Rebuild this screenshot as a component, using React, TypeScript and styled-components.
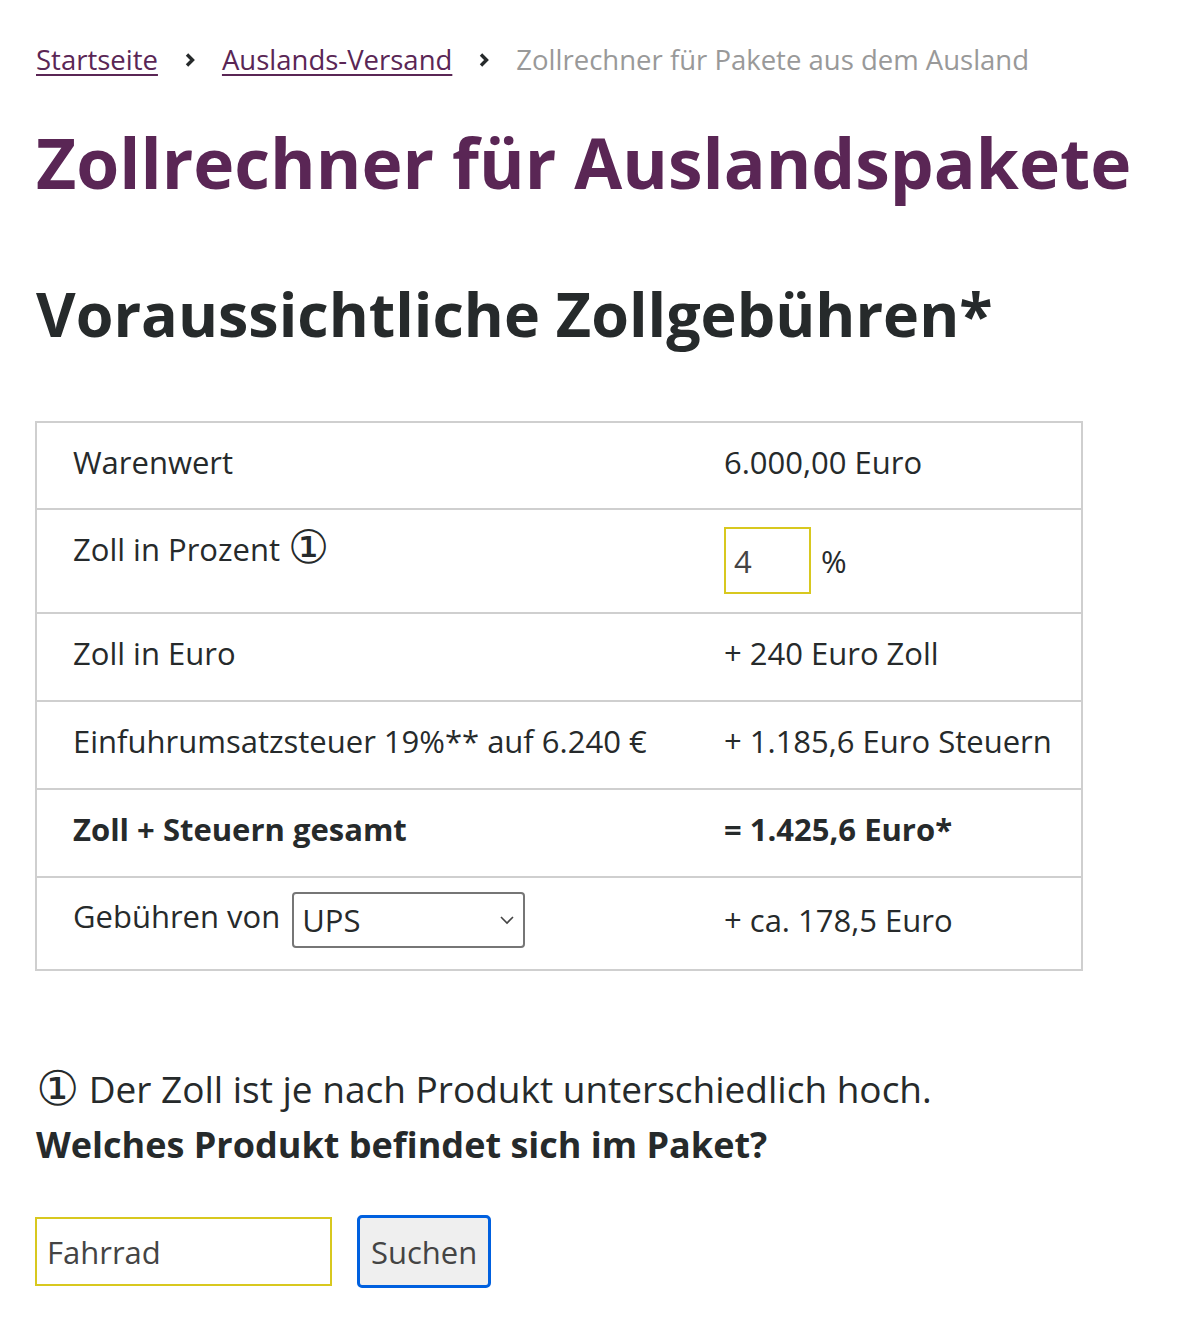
import React from 'react';
import styled, { createGlobalStyle } from 'styled-components';

const GlobalStyle = createGlobalStyle`
  body {
    margin: 0;
    background: #fff;
    font-family: 'Open Sans', 'Noto Sans', sans-serif;
    color: #262a2b;
  }
`;

const Page = styled.main`
  padding: 38px 36px 40px 36px;
`;

const Breadcrumb = styled.nav`
  display: flex;
  align-items: center;
  gap: 24px;
  font-size: 27.5px;
  line-height: 44px;
`;

const Crumb = styled.a`
  color: #5a2655;
  text-decoration: underline;
  text-underline-offset: 4px;
  text-decoration-thickness: 2px;
`;

const CurrentCrumb = styled.span`
  color: #999;
`;

const Chevron = styled.svg`
  width: 16px;
  height: 16px;
`;

const Title = styled.h1`
  margin: 32px 0 0;
  font-size: 69.5px;
  line-height: 96px;
  font-weight: 700;
  color: #5a2655;
`;

const Subtitle = styled.h2`
  margin: 59px 0 0;
  font-size: 61px;
  line-height: 90px;
  font-weight: 700;
`;

const Table = styled.table`
  margin-top: 62px;
  margin-left: -1px;
  width: 1048px;
  table-layout: fixed;
  border-collapse: collapse;
  font-size: 31px;
`;

const Row = styled.tr<{ $h: number }>`
  height: ${(p) => p.$h}px;
`;

const Cell = styled.td<{ $bold?: boolean; $top?: boolean }>`
  border: 2px solid #cfcfcf;
  border-right-width: 0;
  padding: ${(p) => (p.$top ? '18px 36px 0' : '0 36px 8px')};
  white-space: nowrap;
  vertical-align: ${(p) => (p.$top ? 'top' : 'middle')};
  font-weight: ${(p) => (p.$bold ? 700 : 400)};
  &:first-child {
    width: 579px;
    border-right: none;
  }
  &:last-child {
    border-left: none;
    border-right: 2px solid #cfcfcf;
  }
`;

const Circled = styled.span<{ $size: number }>`
  font-family: 'DejaVu Sans', sans-serif;
  font-size: ${(p) => p.$size}px;
  line-height: 0;
  vertical-align: -2px;
`;

const PercentWrap = styled.div`
  display: flex;
  align-items: center;
  gap: 10px;
  margin-top: -1px;
`;

const SmallInput = styled.input`
  box-sizing: border-box;
  width: 87px;
  height: 67px;
  border: 2px solid #d8c81f;
  padding: 0 8px;
  font: inherit;
  color: #444;
  outline: none;
`;

const SelectBox = styled.span`
  position: relative;
  display: inline-flex;
  align-items: center;
  box-sizing: border-box;
  width: 233px;
  height: 56px;
  margin-left: 12px;
  padding: 0 8px;
  border: 2px solid #767676;
  border-radius: 4px;
  vertical-align: middle;
`;

const SelectArrow = styled.svg`
  position: absolute;
  right: 8px;
  top: 50%;
  margin-top: -6px;
  width: 16px;
  height: 12px;
`;

const Note = styled.p`
  margin: 90px 0 0;
  font-size: 37px;
  line-height: 56px;
`;

const Question = styled.p`
  margin: 0;
  font-size: 36px;
  line-height: 56px;
  font-weight: 700;
`;

const SearchRow = styled.form`
  display: flex;
  align-items: center;
  gap: 25px;
  margin-top: 42px;
  margin-left: -1px;
`;

const SearchInput = styled.input`
  box-sizing: border-box;
  width: 297px;
  height: 69px;
  border: 2px solid #d8c81f;
  padding: 0 10px;
  font: inherit;
  font-size: 31px;
  color: #444;
  outline: none;
`;

const SearchButton = styled.button`
  box-sizing: border-box;
  height: 73px;
  padding: 0 11px;
  border: 3px solid #0060df;
  border-radius: 5px;
  background: #efefef;
  font: inherit;
  font-size: 31px;
  color: #444;
`;

const Arrow = () => (
  <Chevron viewBox="0 0 16 16">
    <path d="M5 2.5l5.5 5.5-5.5 5.5" fill="none" stroke="#262a2b" strokeWidth="3.4" />
  </Chevron>
);

export default function App() {
  return (
    <>
      <GlobalStyle />
      <Page>
        <Breadcrumb>
          <Crumb href="#">Startseite</Crumb>
          <Arrow />
          <Crumb href="#">Auslands-Versand</Crumb>
          <Arrow />
          <CurrentCrumb>Zollrechner für Pakete aus dem Ausland</CurrentCrumb>
        </Breadcrumb>
        <Title>Zollrechner für Auslandspakete</Title>
        <Subtitle>Voraussichtliche Zollgebühren*</Subtitle>
        <Table>
          <tbody>
            <Row $h={87}>
              <Cell>Warenwert</Cell>
              <Cell>6.000,00 Euro</Cell>
            </Row>
            <Row $h={104}>
              <Cell $top>
                Zoll in Prozent <Circled $size={46}>①</Circled>
              </Cell>
              <Cell $top>
                <PercentWrap>
                  <SmallInput defaultValue="4" />
                  <span>%</span>
                </PercentWrap>
              </Cell>
            </Row>
            <Row $h={88}>
              <Cell>Zoll in Euro</Cell>
              <Cell>+ 240 Euro Zoll</Cell>
            </Row>
            <Row $h={88}>
              <Cell>Einfuhrumsatzsteuer 19%** auf 6.240 €</Cell>
              <Cell>+ 1.185,6 Euro Steuern</Cell>
            </Row>
            <Row $h={88}>
              <Cell $bold>Zoll + Steuern gesamt</Cell>
              <Cell $bold>= 1.425,6 Euro*</Cell>
            </Row>
            <Row $h={93}>
              <Cell>
                Gebühren von
                <SelectBox>
                  UPS
                  <SelectArrow viewBox="0 0 16 12">
                    <path d="M2 3l6 6 6-6" fill="none" stroke="#444" strokeWidth="1.6" />
                  </SelectArrow>
                </SelectBox>
              </Cell>
              <Cell>+ ca. 178,5 Euro</Cell>
            </Row>
          </tbody>
        </Table>
        <Note>
          <Circled $size={48}>①</Circled> Der Zoll ist je nach Produkt unterschiedlich hoch.
        </Note>
        <Question>Welches Produkt befindet sich im Paket?</Question>
        <SearchRow onSubmit={(e) => e.preventDefault()}>
          <SearchInput defaultValue="Fahrrad" />
          <SearchButton type="submit">Suchen</SearchButton>
        </SearchRow>
      </Page>
    </>
  );
}
